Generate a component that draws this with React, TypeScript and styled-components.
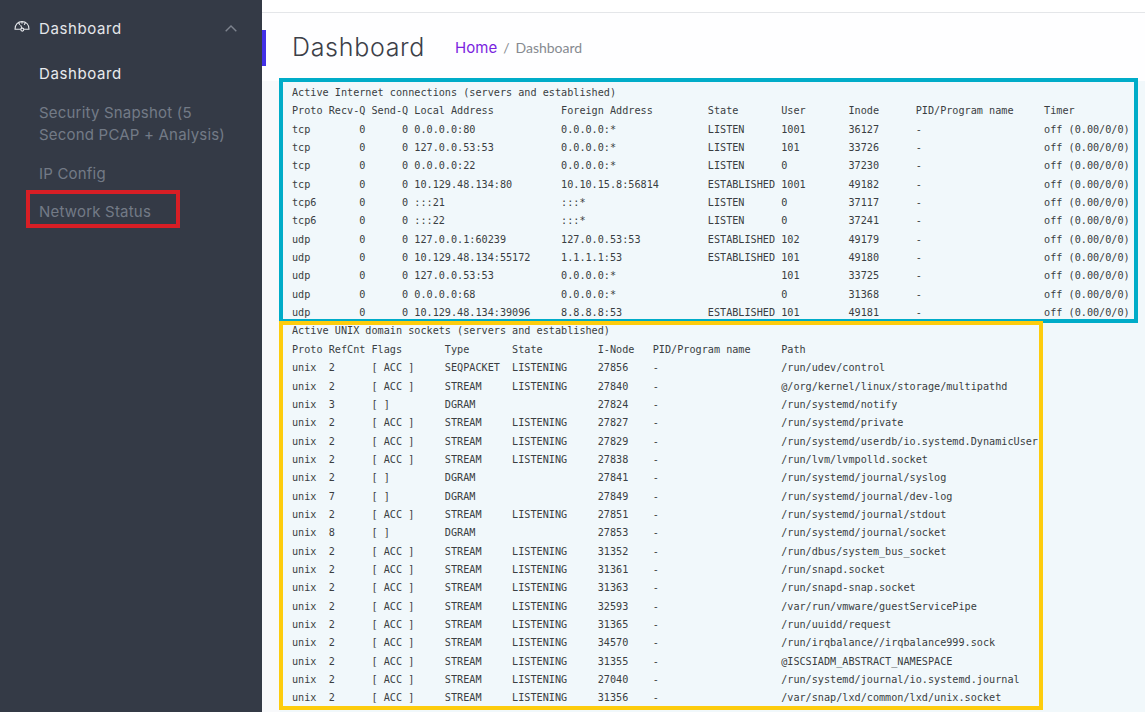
import React from "react";
import styled, { createGlobalStyle } from "styled-components";

const Global = createGlobalStyle`
  html, body { margin: 0; padding: 0; height: 100%; overflow: hidden; background: #fafbfc; }
  #root { height: 100%; }
`;

const Shell = styled.div`
  display: flex;
  width: 1145px;
  height: 712px;
  overflow: hidden;
`;

const Sidebar = styled.aside`
  flex: 0 0 262px;
  box-sizing: border-box;
  background: #343a46;
  padding-top: 16px;
  font-family: "Inter", "Noto Sans", sans-serif;
  font-size: 15px;
  letter-spacing: 0.2px;
`;

const Parent = styled.div`
  display: flex;
  align-items: center;
  height: 24px;
  padding: 0 25px 0 14px;
  color: #e4e6ea;
  letter-spacing: 0.6px;
`;

const ParentIcon = styled.svg`
  flex: 0 0 16px;
  width: 16px;
  height: 16px;
  margin: -4px 9px 0 0;
`;

const ParentLabel = styled.span`
  flex: 1;
`;

const SubMenu = styled.ul`
  list-style: none;
  margin: 0;
  padding: 23px 0 0 39px;
`;

const SubItem = styled.li<{ $active?: boolean; $gap: number }>`
  position: relative;
  width: 200px;
  line-height: 22px;
  margin-top: ${(p) => p.$gap}px;
  color: ${(p) => (p.$active ? "#e8eaee" : "#737a86")};
  letter-spacing: ${(p) => (p.$active ? "0.6px" : "0.2px")};
`;

const RedBox = styled.span`
  position: absolute;
  left: -13px;
  top: -11px;
  width: 154px;
  height: 38px;
  box-sizing: border-box;
  border: 4px solid #d81e25;
`;

const Main = styled.main`
  flex: 1;
  min-width: 0;
  display: flex;
  flex-direction: column;
`;

const TopBar = styled.div`
  flex: 0 0 12px;
  background: #ffffff;
  border-bottom: 1px solid #e4e6e9;
`;

const PageHead = styled.header`
  position: relative;
  flex: 0 0 68px;
  box-sizing: border-box;
  display: flex;
  align-items: center;
  padding: 0 0 0 30px;
  background: #fefeff;
`;

const TabMark = styled.span`
  position: absolute;
  left: 0;
  top: 17px;
  width: 4px;
  height: 36px;
  background: #4230e6;
`;

const Title = styled.h1`
  margin: 0 30px 0 0;
  font-family: "Inter", "Noto Sans", sans-serif;
  font-size: 25px;
  font-weight: 300;
  letter-spacing: 0.7px;
  color: #3c4048;
`;

const Crumbs = styled.nav`
  display: flex;
  align-items: center;
  gap: 6px;
  font-family: "Lato", "Noto Sans", sans-serif;
  font-size: 14px;
  color: #868a90;
`;

const CrumbLink = styled.a`
  font-family: "Inter", sans-serif;
  font-size: 15px;
  color: #7a1fe0;
`;

const ConsoleWrap = styled.section`
  flex: 1;
  background: #f8f9fb;
  padding-left: 18px;
`;

const Console = styled.div`
  position: relative;
  height: 100%;
  box-sizing: border-box;
  padding: 3px 0 0 12px;
  background: #f1f8fb;
`;

const Pre = styled.pre`
  margin: 0;
  font-family: "DejaVu Sans Mono", monospace;
  font-size: 10.165px;
  line-height: 18.35px;
  color: #3a3e42;
`;

const Outline = styled.span<{ $color: string; $top: number; $w: number; $h: number }>`
  position: absolute;
  left: -1px;
  top: ${(p) => p.$top}px;
  width: ${(p) => p.$w}px;
  height: ${(p) => p.$h}px;
  box-sizing: border-box;
  border: 4px solid ${(p) => p.$color};
  pointer-events: none;
`;

const inet = (a: string, b: string, c: string, d: string, e: string, f: string, g: string, h: string, i: string, j: string) =>
  a.padEnd(5) + " " + b.padStart(6) + " " + c.padStart(6) + " " + d.padEnd(23) + " " + e.padEnd(23) + " " + f.padEnd(11) + " " + g.padEnd(10) + " " + h.padEnd(10) + " " + i.padEnd(20) + " " + j;

const off = "off (0.00/0/0)";
const inetRows: string[][] = [
  ["tcp", "0.0.0.0:80", "0.0.0.0:*", "LISTEN", "1001", "36127"],
  ["tcp", "127.0.0.53:53", "0.0.0.0:*", "LISTEN", "101", "33726"],
  ["tcp", "0.0.0.0:22", "0.0.0.0:*", "LISTEN", "0", "37230"],
  ["tcp", "10.129.48.134:80", "10.10.15.8:56814", "ESTABLISHED", "1001", "49182"],
  ["tcp6", ":::21", ":::*", "LISTEN", "0", "37117"],
  ["tcp6", ":::22", ":::*", "LISTEN", "0", "37241"],
  ["udp", "127.0.0.1:60239", "127.0.0.53:53", "ESTABLISHED", "102", "49179"],
  ["udp", "10.129.48.134:55172", "1.1.1.1:53", "ESTABLISHED", "101", "49180"],
  ["udp", "127.0.0.53:53", "0.0.0.0:*", "", "101", "33725"],
  ["udp", "0.0.0.0:68", "0.0.0.0:*", "", "0", "31368"],
  ["udp", "10.129.48.134:39096", "8.8.8.8:53", "ESTABLISHED", "101", "49181"],
];

const unix = (a: string, b: string, c: string, d: string, e: string, f: string, g: string, h: string) =>
  a.padEnd(5) + " " + b.padEnd(6) + " " + c.padEnd(11) + " " + d.padEnd(10) + " " + e.padEnd(13) + " " + f.padEnd(8) + " " + g.padEnd(20) + " " + h;

const unixRows: string[][] = [
  ["2", "[ ACC ]", "SEQPACKET", "LISTENING", "27856", "/run/udev/control"],
  ["2", "[ ACC ]", "STREAM", "LISTENING", "27840", "@/org/kernel/linux/storage/multipathd"],
  ["3", "[ ]", "DGRAM", "", "27824", "/run/systemd/notify"],
  ["2", "[ ACC ]", "STREAM", "LISTENING", "27827", "/run/systemd/private"],
  ["2", "[ ACC ]", "STREAM", "LISTENING", "27829", "/run/systemd/userdb/io.systemd.DynamicUser"],
  ["2", "[ ACC ]", "STREAM", "LISTENING", "27838", "/run/lvm/lvmpolld.socket"],
  ["2", "[ ]", "DGRAM", "", "27841", "/run/systemd/journal/syslog"],
  ["7", "[ ]", "DGRAM", "", "27849", "/run/systemd/journal/dev-log"],
  ["2", "[ ACC ]", "STREAM", "LISTENING", "27851", "/run/systemd/journal/stdout"],
  ["8", "[ ]", "DGRAM", "", "27853", "/run/systemd/journal/socket"],
  ["2", "[ ACC ]", "STREAM", "LISTENING", "31352", "/run/dbus/system_bus_socket"],
  ["2", "[ ACC ]", "STREAM", "LISTENING", "31361", "/run/snapd.socket"],
  ["2", "[ ACC ]", "STREAM", "LISTENING", "31363", "/run/snapd-snap.socket"],
  ["2", "[ ACC ]", "STREAM", "LISTENING", "32593", "/var/run/vmware/guestServicePipe"],
  ["2", "[ ACC ]", "STREAM", "LISTENING", "31365", "/run/uuidd/request"],
  ["2", "[ ACC ]", "STREAM", "LISTENING", "34570", "/run/irqbalance//irqbalance999.sock"],
  ["2", "[ ACC ]", "STREAM", "LISTENING", "31355", "@ISCSIADM_ABSTRACT_NAMESPACE"],
  ["2", "[ ACC ]", "STREAM", "LISTENING", "27040", "/run/systemd/journal/io.systemd.journal"],
  ["2", "[ ACC ]", "STREAM", "LISTENING", "31356", "/var/snap/lxd/common/lxd/unix.socket"],
];

const output = [
  "Active Internet connections (servers and established)",
  inet("Proto", "Recv-Q", "Send-Q", "Local Address", "Foreign Address", "State", "User", "Inode", "PID/Program name", "Timer"),
  ...inetRows.map((r) => inet(r[0], "0", "0", r[1], r[2], r[3], r[4], r[5], "-", off)),
  "Active UNIX domain sockets (servers and established)",
  unix("Proto", "RefCnt", "Flags", "Type", "State", "I-Node", "PID/Program name", "Path"),
  ...unixRows.map((r) => unix("unix", r[0], r[1], r[2], r[3], r[4], "-", r[5])),
].join("\n");

export default function App() {
  return (
    <>
      <Global />
      <Shell>
        <Sidebar>
          <Parent>
            <ParentIcon viewBox="0 0 16 16" fill="none" stroke="#e4e6ea" strokeWidth="1.1" strokeLinecap="round" strokeLinejoin="round">
              <path d="M1 11.2 C1 6.5 4 3.6 8 3.6 C12 3.6 15 6.5 15 11.2 Z" />
              <path d="M4.6 4.8 L5.6 6.4 M11.4 4.8 L10.4 6.4 M8 3.6 V5.2" />
              <path d="M6.8 7.4 L8.2 11" />
              <circle cx="8.3" cy="11.6" r="1.5" fill="#343a46" />
            </ParentIcon>
            <ParentLabel>Dashboard</ParentLabel>
            <svg width="12" height="7" viewBox="0 0 12 7" fill="none" stroke="#7d838e" strokeWidth="1.4">
              <path d="M0.7 6.2 L6 1 L11.3 6.2" />
            </svg>
          </Parent>
          <SubMenu>
            <SubItem $active $gap={0}>Dashboard</SubItem>
            <SubItem $gap={17}>Security Snapshot (5 Second PCAP + Analysis)</SubItem>
            <SubItem $gap={17}>IP Config</SubItem>
            <SubItem $gap={16}>
              Network Status
              <RedBox />
            </SubItem>
          </SubMenu>
        </Sidebar>
        <Main>
          <TopBar />
          <PageHead>
            <TabMark />
            <Title>Dashboard</Title>
            <Crumbs>
              <CrumbLink>Home</CrumbLink>
              <span>/</span>
              <span>Dashboard</span>
            </Crumbs>
          </PageHead>
          <ConsoleWrap>
            <Console>
              <Pre>{output}</Pre>
              <Outline $color="#00acc8" $top={-3} $w={859} $h={245} />
              <Outline $color="#fdcc0d" $top={240} $w={764} $h={389} />
            </Console>
          </ConsoleWrap>
        </Main>
      </Shell>
    </>
  );
}
